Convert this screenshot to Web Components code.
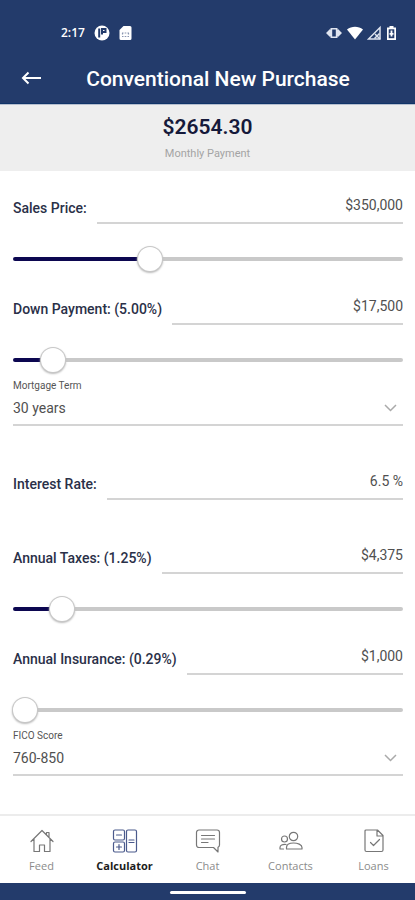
<!DOCTYPE html>
<html lang="en">
<head>
<meta charset="utf-8">
<meta name="viewport" content="width=device-width, initial-scale=1">
<title>Conventional New Purchase</title>
<style>
  :root {
    --brand: #233b6b;
    --accent: #0c0750;
    --line: #d4d4d4;
    --track: #c9c9c9;
    --ink: #2a3048;
    --body: #505050;
  }
  body { margin: 0; background: #fff; color: var(--body); font-family: Roboto, "Liberation Sans", sans-serif; }
</style>
</head>
<body>
<calculator-app></calculator-app>

<script>
const define = (name, html, setup) => {
  const template = document.createElement('template');
  template.innerHTML = html;
  customElements.define(name, class extends HTMLElement {
    constructor() {
      super();
      this.attachShadow({ mode: 'open' }).append(template.content.cloneNode(true));
    }
    connectedCallback() { if (setup) setup(this, this.shadowRoot); }
  });
};

define('status-bar', `
<style>
  :host { display: flex; align-items: center; justify-content: space-between; padding: 24px 17px 0 61px; height: 18px; color: #fff; }
  div { display: flex; align-items: center; }
  .left { gap: 9px; }
  .right { gap: 3px; }
  time { font: 600 12px/18px "Open Sans", sans-serif; }
  svg { display: block; }
</style>
<div class="left">
  <time>2:17</time>
  <svg width="16" height="16" viewBox="0 0 16 16"><circle cx="8" cy="8" r="7.500" fill="#fff"/><path d="M5.200 3.500v9M8 9.500V4h3.500v3H9" fill="none" stroke="#233b6b" stroke-width="2"/></svg>
  <svg width="13" height="16" viewBox="0 0 13 16"><path d="M4.500 1H11a1.500 1.500 0 0 1 1.500 1.500v11A1.500 1.500 0 0 1 11 15H2a1.500 1.500 0 0 1-1.500-1.500V5z" fill="#fff"/><path d="M3 8h1.500M5.700 8h1.600M8.500 8H10M3 11.500h1.500M5.700 11.500h1.600M8.500 11.500H10M3.500 8v1.500M9.500 8v1.500" stroke="#8995b0" stroke-width="1.200"/></svg>
</div>
<div class="right">
  <svg width="18" height="14" viewBox="0 0 18 14"><path d="M1 7l3-3v6zM17 7l-3-3v6z" fill="#dfe4ef"/><path d="M4 3.500h1.500V2h7v1.500H14v7h-1.500V12h-7v-1.500H4z" fill="#dfe4ef"/><rect x="7.200" y="3.500" width="3.600" height="7" fill="#233b6b"/></svg>
  <svg width="18" height="14" viewBox="0 0 18 14"><path d="M1 3.500C5.500-.2 12.500-.2 17 3.500L9 13.500z" fill="#fff"/></svg>
  <svg width="15" height="16" viewBox="0 0 15 16"><path d="M13 2.500v11.500H1.500z" fill="none" stroke="#dfe4ef" stroke-width="1.500"/><path d="M8 9l5 5M12.500 8.500l-5 5" stroke="#dfe4ef" stroke-width="1.500"/></svg>
  <svg width="13" height="16" viewBox="2 0 12 16"><path d="M6 1h4v1.500h2.500v12.500h-9V2.500H6z" fill="#fff"/><path d="M5.200 4.300h5.600v8.900H5.200z" fill="#233b6b"/><path d="M8 5.500v6M6 8.800h4" stroke="#fff" stroke-width="1.800"/></svg>
</div>`);

define('title-bar', `
<style>
  :host { display: grid; grid-template-columns: 61px 1fr; align-items: center; height: 61px; padding-top: 12px; box-sizing: border-box; color: #fff; }
  button { display: grid; place-items: center; width: 61px; height: 40px; padding: 0 0 2px; border: 0; background: none; color: inherit; cursor: pointer; }
  h1 { margin: 0; padding-right: 40px; text-align: center; font-weight: 500; font-size: 21px; line-height: 26px; white-space: nowrap; }
</style>
<button aria-label="Back"><svg width="20" height="14" viewBox="0 0 20 14"><path d="M20 7H2M7.500 1.500L2 7l5.500 5.500" fill="none" stroke="#fff" stroke-width="2"/></svg></button>
<h1><slot></slot></h1>`);

define('payment-summary', `
<style>
  :host { display: flex; flex-direction: column; align-items: center; gap: 7px; padding: 9px 16px 11px; background: #eee; border-top: 1px solid #b7bfcf; }
  output { color: #15193a; font-weight: 600; font-size: 21px; line-height: 26px; }
  span { color: #a4a4a4; font-size: 11px; line-height: 13px; }
</style>
<output><slot name="amount"></slot></output>
<span><slot></slot></span>`);

define('value-field', `
<style>
  :host { display: block; }
  .row { display: flex; gap: 10px; height: 34px; }
  label { color: var(--ink); font-weight: 500; font-size: 14px; line-height: 36px; white-space: nowrap; }
  input { flex: 1; min-width: 0; box-sizing: border-box; margin: 0; padding: 0 0 3px; border: 0; border-bottom: 2px solid var(--line); border-radius: 0; background: none; color: var(--body); font: 14px/20px Roboto, "Liberation Sans", sans-serif; text-align: right; outline: 0; }
</style>
<div class="row"><label for="value"></label><input id="value" type="text" inputmode="decimal"></div>
<slot></slot>`,
(host, root) => {
  root.querySelector('label').textContent = host.getAttribute('label');
  root.querySelector('input').value = host.getAttribute('value');
});

define('range-slider', `
<style>
  :host { display: block; padding-top: 21px; padding-bottom: 1px; }
  input { -webkit-appearance: none; appearance: none; display: block; width: 100%; height: 28px; margin: 0; background: none; cursor: pointer; }
  input::-webkit-slider-runnable-track { height: 4px; border-radius: 2px; background: linear-gradient(to right, var(--accent) var(--fill, 0%), var(--track) var(--fill, 0%)); }
  input::-webkit-slider-thumb { -webkit-appearance: none; width: 24px; height: 24px; margin-top: -10px; border: 0; border-radius: 50%; background: #fff; box-shadow: 0 0 0 1px #c8c8c8, 0 1px 2px 1px #bbb; }
  input::-moz-range-track { height: 4px; border-radius: 2px; background: var(--track); }
  input::-moz-range-progress { height: 4px; border-radius: 2px; background: var(--accent); }
</style>
<input type="range" step="any">`,
(host, root) => {
  const input = root.querySelector('input');
  input.setAttribute('aria-label', host.getAttribute('label'));
  input.min = host.getAttribute('min') || 0;
  input.max = host.getAttribute('max');
  input.value = host.getAttribute('value');
  const paint = () => {
    const part = (input.value - input.min) / (input.max - input.min);
    input.style.setProperty('--fill', part * 100 + '%');
  };
  input.addEventListener('input', paint);
  paint();
});

define('select-field', `
<style>
  :host { display: block; padding-top: 4px; }
  label { display: block; color: #555; font-size: 10px; line-height: 13px; }
  .box { display: grid; align-items: center; border-bottom: 2px solid var(--line); }
  select, svg { grid-area: 1 / 1; }
  select { -webkit-appearance: none; appearance: none; width: 100%; height: 32px; margin: 0; padding: 0 24px 0 0; border: 0; background: none; color: var(--body); font: 14px/20px Roboto, "Liberation Sans", sans-serif; }
  svg { justify-self: end; margin-right: 6px; pointer-events: none; }
</style>
<label for="choice"></label>
<div class="box">
  <select id="choice"></select>
  <svg width="13" height="8" viewBox="0 0 13 8"><path d="M1 1l5.500 5.500L12 1" fill="none" stroke="#aaa" stroke-width="1.500"/></svg>
</div>`,
(host, root) => {
  root.querySelector('label').textContent = host.getAttribute('label');
  root.querySelector('select').add(new Option(host.getAttribute('value')));
});

define('nav-item', `
<style>
  :host { display: block; flex: 1; }
  a { display: flex; flex-direction: column; align-items: center; gap: 4px; padding-top: 12px; color: #8b8b8b; text-decoration: none; font: 11px/16px "Open Sans", sans-serif; }
  :host([current]) a { color: #1c1c1c; font-weight: 700; }
  ::slotted(svg) { display: block; width: 26px; height: 26px; fill: none; stroke: #777; stroke-width: 1.200; stroke-linejoin: round; stroke-linecap: round; }
  :host([current]) ::slotted(svg) { stroke: #4b5a8c; }
</style>
<a href="#"><slot name="icon"></slot><span><slot></slot></span></a>`,
(host, root) => {
  if (host.hasAttribute('current')) root.querySelector('a').setAttribute('aria-current', 'page');
});

define('bottom-nav', `
<style>
  :host { display: block; }
  nav { display: flex; height: 67px; border-top: 2px solid #ececec; background: #fff; }
  .home { display: flex; justify-content: center; align-items: center; height: 15px; padding-top: 2px; background: var(--brand); }
  .home i { width: 76px; height: 3px; border-radius: 2px; background: #fff; }
</style>
<nav aria-label="Main"><slot></slot></nav>
<div class="home"><i></i></div>`);

define('calculator-app', `
<style>
  :host { display: flex; flex-direction: column; min-height: 100vh; }
  header { background: var(--brand); border-bottom: 1px solid #103468; }
  main { flex: 1; padding: 19px 12px 16px 13px; }
  .slid { margin-bottom: 17px; }
  .last { margin-bottom: 0; }
  .gap { margin-top: 40px; margin-bottom: 40px; }
</style>
<header>
  <status-bar></status-bar>
  <title-bar>Conventional New Purchase</title-bar>
</header>
<payment-summary><span slot="amount">$2654.30</span>Monthly Payment</payment-summary>
<main>
  <value-field class="slid" label="Sales Price:" value="$350,000"><range-slider label="Sales price" max="1025000" value="350000"></range-slider></value-field>
  <value-field class="slid last" label="Down Payment: (5.00%)" value="$17,500"><range-slider label="Down payment" max="229000" value="17500"></range-slider></value-field>
  <select-field label="Mortgage Term" value="30 years"></select-field>
  <value-field class="gap" label="Interest Rate:" value="6.5 %"></value-field>
  <value-field class="slid" label="Annual Taxes: (1.25%)" value="$4,375"><range-slider label="Annual taxes" max="43300" value="4375"></range-slider></value-field>
  <value-field class="slid last" label="Annual Insurance: (0.29%)" value="$1,000"><range-slider label="Annual insurance" min="1000" max="20000" value="1000"></range-slider></value-field>
  <select-field label="FICO Score" value="760-850"></select-field>
</main>
<bottom-nav>
  <nav-item><svg slot="icon" viewBox="0 0 26 26"><path d="M2 13.500L13 2.500l11 11M5 11v12.500h5.500V17h5v6.500H21V11M17.500 7V4.500H20v5"/></svg>Feed</nav-item>
  <nav-item current><svg slot="icon" viewBox="0 0 26 26"><rect x="1.500" y="2" width="11" height="10" rx="1.500"/><rect x="1.500" y="14" width="11" height="10" rx="1.500"/><rect x="14.500" y="2" width="10" height="22" rx="1.500"/><path d="M4.500 7h5M4.500 19h5M7 16.500v5M17 12h5M17 14.500h5"/></svg>Calculator</nav-item>
  <nav-item><svg slot="icon" viewBox="0 0 26 26"><path d="M4 2h18a2.500 2.500 0 0 1 2.500 2.500v12.500a2.500 2.500 0 0 1-1.500 2.200V24l-4.500-4.500H4A2.500 2.500 0 0 1 1.500 17V4.500A2.500 2.500 0 0 1 4 2zM6.500 7.500h13M6.500 11h13M6.500 14.500h6.500"/></svg>Chat</nav-item>
  <nav-item><svg slot="icon" viewBox="0 0 26 26"><circle cx="15.500" cy="8.500" r="4.200"/><circle cx="6.500" cy="11" r="3"/><path d="M8.500 21v-1.500c0-3 3-4.500 7-4.500s8.500 1.500 8.500 4.500V21zM8 16.500c-3.500-.3-6 .8-6 3V21h3.500"/></svg>Contacts</nav-item>
  <nav-item><svg slot="icon" viewBox="0 0 26 26"><path d="M5 2h11.500L22 7.500V22a1.500 1.500 0 0 1-1.500 1.500h-15A1.500 1.500 0 0 1 4 22V3a1 1 0 0 1 1-1zM16 2v6h6M9.500 14.500l3 3 6-6"/></svg>Loans</nav-item>
</bottom-nav>`);
</script>
</body>
</html>
